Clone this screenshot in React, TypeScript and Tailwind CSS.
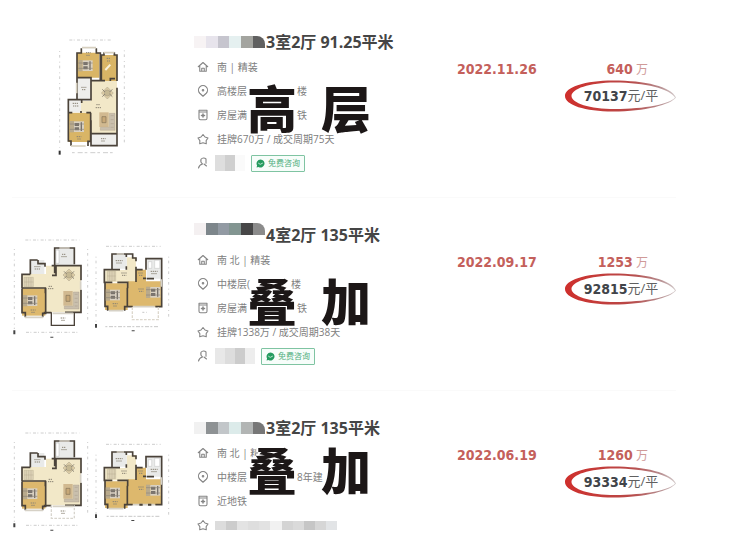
import type { ReactNode } from "react"

type Line = { icon: ReactNode; before: string; after?: string; gap?: string }

type Listing = {
  id: string
  title: string
  mosaic: string[]
  mosaicAlign: string
  lines: Line[]
  agent?: string[]
  stamp: string
  stampTop: string
  date: string
  total: string
  unit: string
  plans: ReactNode
}

function LineIcon({ children }: { children: ReactNode }) {
  return (
    <svg
      viewBox="0 0 24 24"
      className="h-3 w-3 shrink-0 text-[#858585]"
      fill="none"
      stroke="currentColor"
      strokeWidth="2.2"
      strokeLinejoin="round"
      strokeLinecap="round"
      aria-hidden="true"
    >
      {children}
    </svg>
  )
}

const homeIcon = (
  <LineIcon>
    <path d="M2.500 11.500 12 3l9.500 8.500M5.500 10v10.500h13V10M9.500 20.500v-6h5v6" />
  </LineIcon>
)

const pinIcon = (
  <LineIcon>
    <path d="M12 22.500 5.500 16.500a9 9 0 1 1 13 0z" />
    <circle cx="12" cy="10.500" r="1.500" />
  </LineIcon>
)

const tagIcon = (
  <LineIcon>
    <path d="M4 2.500h16v16a3 3 0 0 1-3 3H7a3 3 0 0 1-3-3zM4 6h16" />
    <path d="M12 10v6M9 13h6" strokeWidth="3" />
  </LineIcon>
)

const starIcon = (
  <LineIcon>
    <path d="m12 3 4 5 6 2-3.700 5.200.2 6.300L12 19.500l-6.500 2 .2-6.300L2 10l6-2z" />
  </LineIcon>
)

const userIcon = (
  <LineIcon>
    <path d="M8 4.500A7 7 0 0 1 18 4v8.500M8 4.500c-1 4 0 7.500 3 9.500-4 1-7 4-8 8M14 14l5 4" />
  </LineIcon>
)

function Bed({ x, y }: { x: number; y: number }) {
  return (
    <g transform={`translate(${x} ${y})`}>
      <path d="M0 0h13v34H0z" fill="#b9aa8c" />
      <path d="M13 1h30v32H13z" fill="#d9d1c2" />
      <path d="M15 6h13v9H15zM15 19h13v9H15zM33 4h4v26h-4z" fill="#77716b" />
      <path d="M0 9h43M0 25h43" stroke="#8b8478" strokeWidth="2" />
    </g>
  )
}

function Sofa({ x, y }: { x: number; y: number }) {
  return (
    <g transform={`translate(${x} ${y})`}>
      <path d="M0 0h28v44H0z" fill="#d1b990" />
      <path d="M8 13h12v18H8z" fill="#c7a878" stroke="#847258" strokeWidth="2" />
      <path d="M30 3h17v51H3V45h27z" fill="#c9bfad" stroke="#a0967f" />
      <path d="M34 10h9M34 22h9M34 34h9M34 45h9" stroke="#958a76" />
    </g>
  )
}

function Table({ x, y }: { x: number; y: number }) {
  return (
    <g transform={`translate(${x} ${y})`} stroke="#8d8676">
      <path d="m0-18 18 18L0 18-18 0z" fill="#dccca5" />
      <circle r="9" fill="#c5b893" />
      <path d="m-15-11 8 8M15-11l-8 8M-15 11l8-8M15 11 7 3" strokeWidth="3" />
    </g>
  )
}

function HighRisePlan() {
  return (
    <svg viewBox="170 45 210 360" className="h-[120px] w-[70px]" role="img" aria-label="户型图">
      <g stroke="#b5b5b5" strokeWidth="2" fill="none">
        <path d="M207 57h128" strokeDasharray="9 4 3 7" />
        <path d="M215 395h128" strokeDasharray="8 9 15 6" />
        <path d="M178 90v290M372 88v285" strokeDasharray="3 9 8 12" />
      </g>
      <path d="M175 389h6v12h-6z" fill="#333" />
      <path d="M230 95h67v75h-67zM303 102h47v78h-47zM204 275h67v88h-67z" fill="#d9b566" />
      <path d="M272 180h78v158h-78zM242 240h35v35h-35z" fill="#f2e8c8" />
      <path d="M230 170h42v66h-42zM204 236h38v38h-38zM272 338h78v36h-78z" fill="#eeeeec" />
      <g fill="none" stroke="#4a4239" strokeWidth="5">
        <path d="M243 82v14h-13v74h42v9h28V96h-12V82M300 179h14M303 180V102h8V94m31 0v8h8v78M330 180v-7h14M230 170v66M272 170v66h-42M242 236h-38v40M204 275h12M244 236v10M242 270v6M258 275h14M204 275v85h8v14M271 275v86h-8v14M350 200v138h-78v-40M272 338v36h78v-36" />
      </g>
      <path d="M245 80h42M310 95h32M212 375h44M229 185v32" stroke="#d6cfbf" strokeWidth="5" />
      <Bed x={234} y={117} />
      <path d="m315 147 15-16" stroke="#f9f2dc" strokeWidth="6" />
      <Table x={321} y={216} />
      <Sofa x={297} y={274} />
      <Bed x={208} y={300} />
      <g stroke="#8a8374" strokeWidth="3" strokeDasharray="4 2">
        <path d="M257 95h14M258 103h12M319 112h10M320 120h9M243 199h15M245 206h12M217 247h18M218 255h16M288 251h12M286 260h18M229 347h14M231 354h12M302 353h14M303 360h12" />
      </g>
    </svg>
  )
}

function LowerPlan({ open }: { open?: boolean }) {
  return (
    <svg viewBox="36 52 234 303" className="h-[101px] w-[78px]" role="img" aria-label="下层户型图">
      <g stroke="#b5b5b5" strokeWidth="2" fill="none">
        <path d="M76 58h162M78 335h160" strokeDasharray="9 4 3 7" />
        <path d="M43 85v240M263 85v220" strokeDasharray="3 9 8 12" />
      </g>
      <path d="M40 329h6v12h-6zM151 348h9v3h-9z" fill="#444" />
      <path d="M66 160h72v-25h105v140H138v-73H66z" fill="#f2e8c8" />
      <path d="M66 203h70v82H66z" fill="#ddb86d" />
      <path d="M91 118h42v42H91zM164 82h59v50h-59z" fill="#e9eae9" />
      <g fill="none" stroke="#4a4239" strokeWidth="5">
        <path d="M91 161v-43h22M114 118v11h21v9M91 161H66v41M66 202h70v16M66 203v73h10v14M137 202v76h-9v12M164 158V82h59v49M155 135h88v44M168 135v29h-12M243 207v68h-48M131 276h23" />
        <path
          d="M154 275v39h69v-39"
          stroke={open ? "#d8d5ce" : "#4a4239"}
          strokeWidth="4"
          strokeDasharray={open ? "8 4" : undefined}
        />
      </g>
      <path d="M75 290h54M178 82h31M158 278h62M242 182v24" stroke="#d6d1c6" strokeWidth="5" />
      <path d="M72 170h28v28H72z" fill="#ddd2b6" stroke="#aaa087" />
      <path d="M79 170v28M86 170v28M93 170v28M72 184h28" stroke="#aaa087" />
      <path d="M168 88h9v40h-9z" fill="#fff" stroke="#999" />
      <Table x={207} y={163} />
      <Sofa x={190} y={211} />
      <Bed x={69} y={223} />
      <g stroke="#8a8374" strokeWidth="3" strokeDasharray="4 2">
        <path d="M186 101h12M184 108h16M103 138h19M104 145h17M146 197h12M144 204h18M92 268h15M94 275h12M182 292h14M184 299h12" />
      </g>
    </svg>
  )
}

function UpperPlanDrawing() {
  return (
    <>
      <path d="M288 108v200M506 108v190" stroke="#b5b5b5" strokeWidth="2" strokeDasharray="3 9 8 12" />
      <path d="M318 77h164" stroke="#b5b5b5" strokeWidth="2" strokeDasharray="9 4 3 7" />
      <path d="M316 148h64v-38h28v75h-93z" fill="#f2e8c8" />
      <path d="M315 188h68v80h-68zM384 182h24v-35h30v35h46v76H384z" fill="#ddb86d" />
      <path d="M336 101h44v43h-44zM440 116h44v58h-44z" fill="#e9eae9" />
      <g fill="none" stroke="#4a4239" strokeWidth="5">
        <path d="M336 147v-47h62v12h10v10M379 100v9M379 137v10M360 147h-47v38h24M352 185h31v18M315 185v72h8v13M382 201v57h-8v12M408 138v46M408 147h20M438 147v-33h47v59M485 173v85h-19M398 258h-16M438 173h-9M440 174h22" />
      </g>
      <path d="M350 100h22M327 270h43M399 258h65M484 176v22" stroke="#d6d1c6" strokeWidth="5" />
      <path d="M322 152h25v28h-25z" fill="#ddd2b6" stroke="#aaa087" />
      <path d="M329 152v28M336 152v28M343 152v28M322 166h25" stroke="#aaa087" />
      <path d="M445 123h10v20h-10zM464 119h15v24h-15z" fill="#fff" stroke="#aaa" />
      <Bed x={317} y={206} />
      <Bed x={438} y={198} />
      <g stroke="#8a8374" strokeWidth="3" strokeDasharray="4 2">
        <path d="M347 120h21M349 127h17M364 157h16M366 164h13M415 157h14M417 164h11M452 152h21M454 159h17M338 249h15M340 256h12M415 205h16M417 212h13" />
      </g>
    </>
  )
}

function UpperPlan() {
  return (
    <svg viewBox="282 70 234 267" className="h-[89px] w-[78px]" role="img" aria-label="上层户型图">
      <UpperPlanDrawing />
      <path d="M397 260v37h78v-37" fill="none" stroke="#ddd8cd" strokeWidth="4" strokeDasharray="8 4" />
      <path d="M427 275h13M316 318h162" stroke="#aaa" strokeWidth="2" strokeDasharray="6 5 12 4" />
      <path d="M285 310h6v11h-6zM395 329h9v3h-9z" fill="#444" />
    </svg>
  )
}

function UpperPlanShort() {
  return (
    <svg viewBox="282 67 234 246" className="h-[82px] w-[78px]" role="img" aria-label="上层户型图">
      <UpperPlanDrawing />
      <path d="M418 258h10M444 258h10" stroke="#4a4239" strokeWidth="6" />
      <path d="M320 293h162" stroke="#aaa" strokeWidth="2" strokeDasharray="6 5 12 4" />
      <path d="M285 287h6v11h-6zM394 304h9v3h-9z" fill="#444" />
    </svg>
  )
}

const listings: Listing[] = [
  {
    id: "a",
    title: "3室2厅 91.25平米",
    mosaic: ["bg-[#f7f3f4]", "bg-[#e7e4ec]", "bg-[#c6c5ce]", "bg-[#e5f0f0]", "bg-[#a3a49f]", "bg-[#606060]"],
    mosaicAlign: "self-center",
    lines: [
      { icon: homeIcon, before: "南 | 精装" },
      { icon: pinIcon, before: "高楼层", after: "楼", gap: "w-[50px]" },
      { icon: tagIcon, before: "房屋满", after: "铁", gap: "w-[50px]" },
      { icon: starIcon, before: "挂牌670万 / 成交周期75天" },
    ],
    agent: ["bg-[#dedede]", "bg-[#cfcfcf]", "bg-[#fafafa]"],
    stamp: "高层",
    stampTop: "top-[54px]",
    date: "2022.11.26",
    total: "640",
    unit: "70137",
    plans: <HighRisePlan />,
  },
  {
    id: "b",
    title: "4室2厅 135平米",
    mosaic: ["bg-[#f4f0f1]", "bg-[#7d868b]", "bg-[#929aa3]", "bg-[#829591]", "bg-[#464647]", "bg-[#8b8b8b]"],
    mosaicAlign: "self-start",
    lines: [
      { icon: homeIcon, before: "南 北 | 精装" },
      { icon: pinIcon, before: "中楼层(", after: "楼", gap: "w-[41px]" },
      { icon: tagIcon, before: "房屋满", after: "铁", gap: "w-[50px]" },
      { icon: starIcon, before: "挂牌1338万 / 成交周期38天" },
    ],
    agent: ["bg-[#e8e8e8]", "bg-[#dddddd]", "bg-[#cccccc]", "bg-[#ededed]"],
    stamp: "叠加",
    stampTop: "top-[54px]",
    date: "2022.09.17",
    total: "1253",
    unit: "92815",
    plans: (
      <>
        <LowerPlan />
        <UpperPlan />
      </>
    ),
  },
  {
    id: "c",
    title: "3室2厅 135平米",
    mosaic: ["bg-[#f1f1f1]", "bg-[#8e9294]", "bg-[#c2c6c9]", "bg-[#dcebea]", "bg-[#b2b5b4]", "bg-[#777777]"],
    mosaicAlign: "self-center",
    lines: [
      { icon: homeIcon, before: "南 北 | 精" },
      { icon: pinIcon, before: "中楼层", after: "8年建", gap: "w-[50px]" },
      { icon: tagIcon, before: "近地铁" },
    ],
    stamp: "叠加",
    stampTop: "top-[30px]",
    date: "2022.06.19",
    total: "1260",
    unit: "93334",
    plans: (
      <>
        <LowerPlan open />
        <UpperPlanShort />
      </>
    ),
  },
]

const hiddenLine = [
  "bg-[#dcdcdc]",
  "bg-[#cccccc]",
  "bg-[#e3e3e3]",
  "bg-[#dedede]",
  "bg-[#e2e2e2]",
  "bg-[#f1f1f1]",
  "bg-[#d4d4d4]",
  "bg-[#dadada]",
  "bg-[#c6c6c6]",
  "bg-[#d6d6d6]",
  "bg-[#e2e4e6]",
]

function PriceRing({ id }: { id: string }) {
  return (
    <svg
      viewBox="0 0 112 32"
      className="pointer-events-none absolute inset-0 h-8 w-28"
      aria-hidden="true"
    >
      <defs>
        <linearGradient id={`ring-${id}`}>
          <stop offset="0" stopColor="#cf2f2c" />
          <stop offset="0.6" stopColor="#b84a49" />
          <stop offset="0.85" stopColor="#b58a8c" />
          <stop offset="1" stopColor="#d4cccc" />
        </linearGradient>
      </defs>
      <path
        fill={`url(#ring-${id})`}
        fillRule="evenodd"
        d="M1 16C1 7 21 .5 49 .5c32 0 58 6 63 17-5 7-31 14-63 14C21 31.500 1 25 1 16zM7.500 16c0 7 18 13 43.500 13 30 0 55-5 60-11.500C106 9 81 2.500 51 2.500 25 2.500 7.500 9 7.500 16z"
      />
    </svg>
  )
}

function ConsultButton() {
  return (
    <button
      type="button"
      className="flex h-[17px] items-center gap-[3px] rounded-[1px] border border-[#7fc4a2] bg-[#f7fdfa] px-1 text-[8px] leading-none text-[#4fae80]"
    >
      <svg viewBox="0 0 16 16" className="h-[9px] w-[9px]" aria-hidden="true">
        <path d="M8 1a7 7 0 1 1-3.500 13L1 15l.9-3.600A7 7 0 0 1 8 1z" fill="#259b5f" />
        <path d="m4.500 7.500 3 2 4-2" fill="none" stroke="#d8f2e4" strokeWidth="1.500" strokeLinecap="round" />
      </svg>
      免费咨询
    </button>
  )
}

function ListingRow({ listing }: { listing: Listing }) {
  return (
    <article className="grid grid-cols-[160px_minmax(0,1fr)_107px_112px] pt-[25px] pb-[22px]">
      <div className="flex h-[131px] items-center justify-center gap-1">{listing.plans}</div>

      <div className="relative pl-[22px]">
        <h2 className="flex h-6 items-center gap-px text-base font-bold whitespace-nowrap text-[#454545]">
          <span className={`flex h-3 w-[71px] overflow-hidden rounded-tr-lg ${listing.mosaicAlign}`}>
            {listing.mosaic.map((tone) => (
              <span key={tone} className={`flex-1 ${tone}`} />
            ))}
          </span>
          {listing.title}
        </h2>

        <ul className="pt-px pl-[3px] text-[10px] leading-6 whitespace-nowrap text-[#808080]">
          {listing.lines.map((line) => (
            <li key={line.before} className="flex h-6 items-center">
              {line.icon}
              <span className="pl-2">{line.before}</span>
              {line.gap && <span className={line.gap} />}
              {line.after}
            </li>
          ))}
          {listing.agent ? (
            <li className="flex h-6 items-center">
              {userIcon}
              <span className="flex h-4 px-1.5">
                {listing.agent.map((tone) => (
                  <span key={tone} className={`h-4 w-[10px] ${tone}`} />
                ))}
              </span>
              <ConsultButton />
            </li>
          ) : (
            <li className="flex h-6 items-center gap-1.5">
              {starIcon}
              <span className="flex h-[9px] w-[122px]">
                {hiddenLine.map((tone) => (
                  <span key={tone} className={`flex-1 ${tone}`} />
                ))}
              </span>
            </li>
          )}
        </ul>

        <p
          className={`absolute left-[75px] flex gap-6 text-[50px] leading-[50px] font-black text-[#1c1717] [text-shadow:0_0_2px_#fff,2px_0_#fff,-2px_0_#fff,0_2px_#fff,0_-2px_#fff] ${listing.stampTop}`}
        >
          {listing.stamp.split("").map((char) => (
            <span key={char}>{char}</span>
          ))}
        </p>
      </div>

      <time className="pt-[29px] font-['DejaVu_Sans_Condensed','DejaVu_Sans'] text-sm leading-5 font-bold text-[#c4605b]">
        {listing.date}
      </time>

      <div className="pt-[29px]">
        <p className="pr-7 text-right text-xs leading-5 text-[#d09a98]">
          <span className="font-['DejaVu_Sans_Condensed','DejaVu_Sans'] text-sm font-bold text-[#c4605b]">
            {listing.total}
          </span>{" "}
          万
        </p>
        <p className="relative flex h-8 items-center justify-center pl-0.5 text-[13px] text-[#606060]">
          <PriceRing id={listing.id} />
          <span className="font-['DejaVu_Sans_Condensed','DejaVu_Sans'] text-sm font-bold text-[#414449]">
            {listing.unit}
          </span>
          元/平
        </p>
      </div>
    </article>
  )
}

export default function App() {
  return (
    <main className="min-h-screen bg-white pt-[5px] pr-16 pl-3 font-['Open_Sans','Noto_Sans_CJK_SC',sans-serif]">
      <div className="divide-y divide-[#fafafa]">
        {listings.map((listing) => (
          <ListingRow key={listing.id} listing={listing} />
        ))}
      </div>
    </main>
  )
}
